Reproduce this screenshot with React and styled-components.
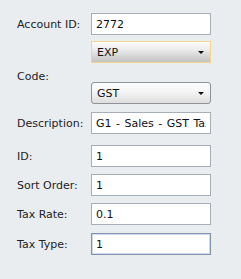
import React from "react";
import styled, { createGlobalStyle } from "styled-components";

const GlobalStyle = createGlobalStyle`
  html, body {
    margin: 0;
    padding: 0;
    background: #eaedf0;
  }
  body {
    font-family: "DejaVu Sans", Verdana, sans-serif;
  }
`;

const Form = styled.div`
  width: 241px;
  height: 279px;
  box-sizing: border-box;
  padding: 13px 0 0 17px;
  background: #eaedf0;
`;

const Row = styled.div`
  display: flex;
  align-items: center;
  height: ${(p) => p.$height || 22}px;
  margin-top: ${(p) => p.$gap || 0}px;
`;

const Label = styled.div`
  width: 74px;
  font-size: 11px;
  color: #222;
  white-space: nowrap;
  align-self: ${(p) => (p.$top ? "flex-end" : "center")};
  margin-bottom: ${(p) => (p.$top ? -1 : 0)}px;
`;

const TextBox = styled.input`
  width: 120px;
  height: 22px;
  box-sizing: border-box;
  padding: 0 4px;
  margin: 0;
  border: 1px solid ${(p) => (p.$focused ? "#7b93ad" : "#a7aeb8")};
  box-shadow: ${(p) => (p.$focused ? "inset 0 0 0 1px #d3dde8" : "none")};
  background: #fff;
  font-family: "DejaVu Sans", Verdana, sans-serif;
  font-size: 11px;
  word-spacing: 1px;
  color: #111;
  outline: none;
`;

const Combo = styled.div`
  width: 120px;
  height: 22px;
  box-sizing: border-box;
  display: flex;
  align-items: center;
  justify-content: space-between;
  padding: 0 6px 0 5px;
  border: 1px solid ${(p) => (p.$active ? "#f0d58c" : "#8f9296")};
  border-radius: ${(p) => (p.$active ? 0 : 3)}px;
  background: ${(p) =>
    p.$active
      ? "linear-gradient(#fbfbfb 0%, #eeeeee 35%, #c2c2c2 100%)"
      : "linear-gradient(#fdfdfd 0%, #f4f4f4 45%, #dedede 100%)"};
  font-size: 11px;
  color: #111;
`;

const Arrow = styled.span`
  width: 0;
  height: 0;
  border-left: 3px solid transparent;
  border-right: 3px solid transparent;
  border-top: 3px solid #111;
`;

export default function App() {
  return (
    <>
      <GlobalStyle />
      <Form>
        <Row>
          <Label>Account ID:</Label>
          <TextBox readOnly value="2772" />
        </Row>
        <Row $gap={6}>
          <Label />
          <Combo $active>
            <span>EXP</span>
            <Arrow />
          </Combo>
        </Row>
        <Row $height={19}>
          <Label $top>Code:</Label>
        </Row>
        <Row>
          <Label />
          <Combo>
            <span>GST</span>
            <Arrow />
          </Combo>
        </Row>
        <Row $gap={8}>
          <Label>Description:</Label>
          <TextBox readOnly value="G1 - Sales - GST Taxable" />
        </Row>
        <Row $gap={11}>
          <Label>ID:</Label>
          <TextBox readOnly value="1" />
        </Row>
        <Row $gap={7}>
          <Label>Sort Order:</Label>
          <TextBox readOnly value="1" />
        </Row>
        <Row $gap={7}>
          <Label>Tax Rate:</Label>
          <TextBox readOnly value="0.1" />
        </Row>
        <Row $gap={8}>
          <Label>Tax Type:</Label>
          <TextBox $focused readOnly value="1" />
        </Row>
      </Form>
    </>
  );
}
